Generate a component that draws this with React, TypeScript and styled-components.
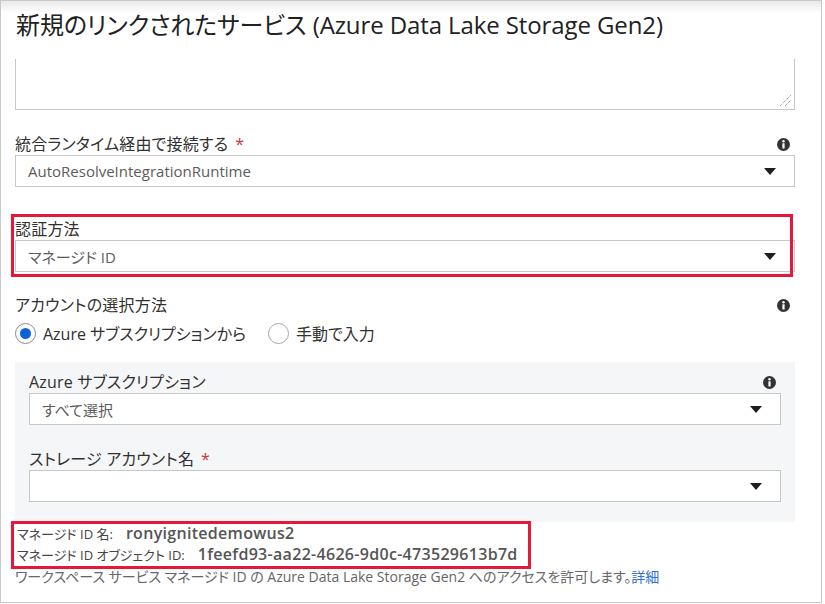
import React from "react";
import styled, { createGlobalStyle } from "styled-components";

const GlobalStyle = createGlobalStyle`
  html, body { margin: 0; padding: 0; background: #ffffff; }
  body {
    font-family: "Segoe UI", "Open Sans", "Noto Sans CJK JP", sans-serif;
    font-feature-settings: "palt" 1;
    color: #323130;
  }
  * { box-sizing: border-box; }
`;

const Frame = styled.div`
  width: 822px;
  height: 603px;
  border: 1px solid #c8c8c8;
  background: #ffffff;
  overflow: hidden;
  display: flex;
  flex-direction: column;
`;

const Header = styled.div`
  height: 58px;
  flex: none;
  padding: 7px 0 0 15px;
  background: linear-gradient(#e9e9e9 0px, #ffffff 12px);
`;

const Title = styled.h1`
  margin: 0;
  font-size: 24px;
  font-weight: 400;
  line-height: 34px;
  color: #212121;
  white-space: nowrap;
  letter-spacing: -0.1px;
`;

const Body = styled.div`
  padding: 0 26px 0 14px;
  display: flex;
  flex-direction: column;
`;

const TextAreaStub = styled.div`
  position: relative;
  height: 51px;
  border: 1px solid #c8c8c8;
  border-top: none;
`;

const Grip = styled.svg`
  position: absolute;
  right: 2px;
  bottom: 2px;
`;

const Field = styled.div<{ $top: number }>`
  margin-top: ${(p) => p.$top}px;
  display: flex;
  flex-direction: column;
`;

const LabelRow = styled.div`
  height: 22px;
  display: flex;
  align-items: center;
  justify-content: space-between;
  padding-right: 5px;
`;

const Label = styled.span`
  font-size: 16px;
  line-height: 22px;
  color: #323130;
  white-space: nowrap;
  letter-spacing: 0.2px;
`;

const Required = styled.span`
  color: #d13438;
  margin-left: 7px;
`;

const SelectBox = styled.div`
  height: 32px;
  border: 1px solid #c8c8c8;
  background: #ffffff;
  display: flex;
  align-items: center;
  justify-content: space-between;
  padding: 0 18px 0 12px;
  font-size: 15px;
  color: #5c5c5c;
`;

const Highlighted = styled.div`
  position: relative;
`;

const RedFrame = styled.div<{ $l: number; $t: number; $r: number; $b: number }>`
  position: absolute;
  left: ${(p) => p.$l}px;
  top: ${(p) => p.$t}px;
  right: ${(p) => p.$r}px;
  bottom: ${(p) => p.$b}px;
  border: 3px solid #e8173a;
  pointer-events: none;
`;

const RadioRow = styled.div`
  margin-top: 5px;
  display: flex;
  align-items: center;
  height: 24px;
`;

const RadioOption = styled.label`
  display: flex;
  align-items: center;
  gap: 7px;
  font-size: 16px;
  color: #323130;
  margin-right: 22px;
  white-space: nowrap;
`;

const RadioCircle = styled.span<{ $checked?: boolean }>`
  width: 21px;
  height: 21px;
  border-radius: 50%;
  border: 1px solid ${(p) => (p.$checked ? "#8a8a8a" : "#a6a6a6")};
  display: flex;
  align-items: center;
  justify-content: center;
  background: #fff;
  &::after {
    content: "";
    width: 11px;
    height: 11px;
    border-radius: 50%;
    background: ${(p) => (p.$checked ? "#0f62d6" : "transparent")};
  }
`;

const Panel = styled.div`
  margin-top: 17px;
  background: #f5f6f8;
  padding: 9px 14px 20px 14px;
  display: flex;
  flex-direction: column;
`;

const Details = styled.div`
  margin-top: 1px;
  padding-left: 2px;
  display: flex;
  flex-direction: column;
`;

const InfoLine = styled.div`
  font-size: 13px;
  line-height: 20px;
  color: #444;
  white-space: nowrap;
`;

const Value = styled.span`
  font-weight: 600;
  font-size: 16px;
  letter-spacing: 0.3px;
  margin-left: 13px;
  color: #555555;
`;

const Note = styled.div`
  font-size: 14px;
  line-height: 20px;
  margin-top: 2px;
  color: #666666;
  white-space: nowrap;
`;

const Link = styled.a`
  color: #2f6fd6;
  text-decoration: none;
`;

const InfoIcon = () => (
  <svg width="13" height="13" viewBox="0 0 13 13">
    <circle cx="6.5" cy="6.5" r="6.5" fill="#333" />
    <circle cx="6.5" cy="3.3" r="1.2" fill="#fff" />
    <rect x="5.4" y="5.3" width="2.2" height="5.2" fill="#fff" />
  </svg>
);

const Caret = () => (
  <svg width="12" height="7" viewBox="0 0 12 7">
    <path d="M0 0 L12 0 L6 7 Z" fill="#1e1e1e" />
  </svg>
);

type SelectProps = { value?: string };
const Select = ({ value }: SelectProps) => (
  <SelectBox>
    <span>{value}</span>
    <Caret />
  </SelectBox>
);

export default function App() {
  return (
    <>
      <GlobalStyle />
      <Frame>
        <Header>
          <Title>新規のリンクされたサービス (Azure Data Lake Storage Gen2)</Title>
        </Header>
        <Body>
          <TextAreaStub>
            <Grip width="13" height="13" viewBox="0 0 13 13">
              <path d="M1 12 L12 1 M6 12 L12 6" stroke="#777" strokeWidth="1" strokeDasharray="1 1" />
            </Grip>
          </TextAreaStub>

          <Field $top={23}>
            <LabelRow>
              <Label>
                統合ランタイム経由で接続する<Required>*</Required>
              </Label>
              <InfoIcon />
            </LabelRow>
            <Select value="AutoResolveIntegrationRuntime" />
          </Field>

          <Highlighted>
            <Field $top={31}>
              <LabelRow>
                <Label>認証方法</Label>
              </LabelRow>
              <Select value="マネージド ID" />
            </Field>
            <RedFrame $l={-4} $t={27} $r={2} $b={-5} />
          </Highlighted>

          <Field $top={22}>
            <LabelRow>
              <Label>アカウントの選択方法</Label>
              <InfoIcon />
            </LabelRow>
            <RadioRow>
              <RadioOption>
                <RadioCircle $checked />
                Azure サブスクリプションから
              </RadioOption>
              <RadioOption>
                <RadioCircle />
                手動で入力
              </RadioOption>
            </RadioRow>
          </Field>

          <Panel>
            <Field $top={0}>
              <LabelRow>
                <Label>Azure サブスクリプション</Label>
                <InfoIcon />
              </LabelRow>
              <Select value="すべて選択" />
            </Field>
            <Field $top={23}>
              <LabelRow>
                <Label>
                  ストレージ アカウント名<Required>*</Required>
                </Label>
              </LabelRow>
              <Select />
            </Field>
          </Panel>

          <Highlighted>
            <Details>
              <InfoLine>
                マネージド ID 名:<Value>ronyignitedemowus2</Value>
              </InfoLine>
              <InfoLine>
                マネージド ID オブジェクト ID:<Value>1feefd93-aa22-4626-9d0c-473529613b7d</Value>
              </InfoLine>
            </Details>
            <RedFrame $l={-4} $t={-1} $r={264} $b={-4} />
          </Highlighted>
          <Note>
            ワークスペース サービス マネージド ID の Azure Data Lake Storage Gen2 へのアクセスを許可します。
            <Link href="#">詳細</Link>
          </Note>
        </Body>
      </Frame>
    </>
  );
}
